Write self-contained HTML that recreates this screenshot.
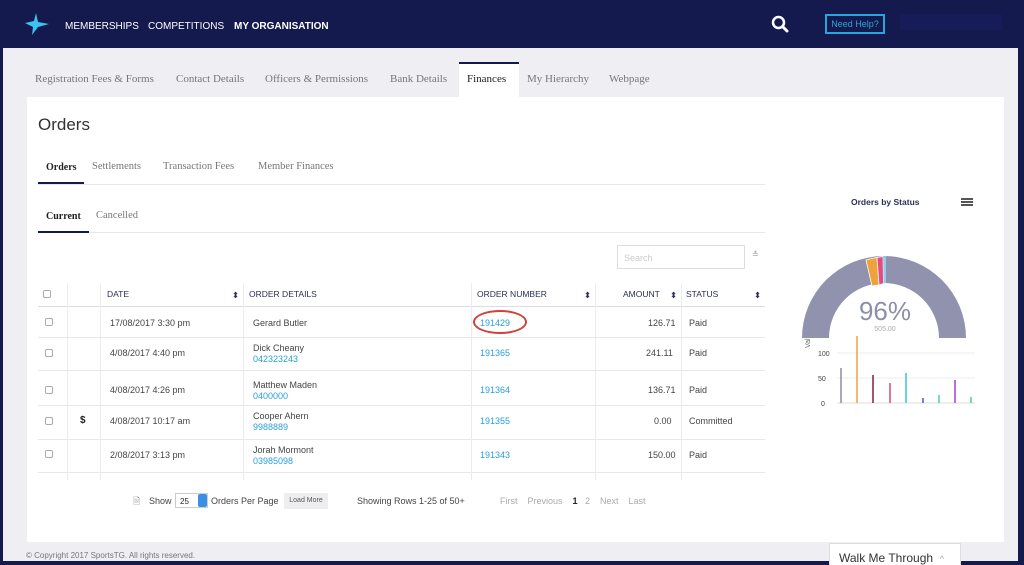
<!DOCTYPE html>
<html><head><style>
*{box-sizing:border-box;margin:0;padding:0}
body{width:1024px;height:565px;overflow:hidden;background:#141a4e;font-family:"Liberation Sans",sans-serif;position:relative}
.a{position:absolute}
.nav{color:#fff;font-size:10px;top:21px}
.grey{left:3px;top:48px;width:1015px;height:513px;background:#efeef2}
.tab{top:73px;font-family:"Liberation Serif",serif;font-size:11px;color:#777}
.panel{left:27px;top:97px;width:977px;height:445px;background:#fff}
.t{font-size:9px;color:#444}
.hd{font-size:8.5px;color:#2b2f55}
.lnk{color:#2a9fd6;font-size:9px}
.hl{height:1px;background:#e8e8ec}
.vl{width:1px;background:#ececf0}
.cb{width:8px;height:8px;border:1px solid #aaa;border-radius:2px;background:#fff}
</style></head><body>
<svg class="a" style="left:24px;top:12px" width="26" height="24" viewBox="0 0 26 24"><path d="M12 1 L14 10 L25 12 L14 15 L8 23 L9 15 L1 11 L10 9 Z" fill="#3cc4f0"/></svg>
<div class="a nav" style="left:65px">MEMBERSHIPS</div>
<div class="a nav" style="left:148px">COMPETITIONS</div>
<div class="a nav" style="left:234px;font-weight:bold">MY ORGANISATION</div>
<svg class="a" style="left:771px;top:15px" width="18" height="18" viewBox="0 0 18 18"><circle cx="7.5" cy="7.5" r="5.5" fill="none" stroke="#fff" stroke-width="2.5"/><path d="M11.5 11.5 L16 16" stroke="#fff" stroke-width="3" stroke-linecap="round"/></svg>
<div class="a" style="left:825px;top:14px;width:60px;height:20px;border:2px solid #2aa5dc;color:#2aa5dc;font-size:9px;text-align:center;line-height:16px">Need Help?</div>
<div class="a" style="left:900px;top:14px;width:102px;height:16px;background:#16206a;opacity:.4"></div>
<div class="a grey"></div>
<div class="a tab" style="left:35px">Registration Fees &amp; Forms</div>
<div class="a tab" style="left:176px">Contact Details</div>
<div class="a tab" style="left:265px">Officers &amp; Permissions</div>
<div class="a tab" style="left:390px">Bank Details</div>
<div class="a" style="left:459px;top:62px;width:60px;height:36px;background:#fff;border-top:2px solid #141a4e"></div>
<div class="a tab" style="left:467px;color:#222">Finances</div>
<div class="a tab" style="left:527px">My Hierarchy</div>
<div class="a tab" style="left:609px">Webpage</div>
<div class="a panel"></div>
<div class="a" style="left:38px;top:115px;font-size:17px;color:#333">Orders</div>
<div class="a" style="left:46px;top:162px;font-size:10px;color:#222;font-weight:bold;font-family:'Liberation Serif',serif">Orders</div>
<div class="a tab" style="left:92px;top:161px;font-size:10.5px">Settlements</div>
<div class="a tab" style="left:163px;top:161px;font-size:10.5px">Transaction Fees</div>
<div class="a tab" style="left:258px;top:161px;font-size:10.5px">Member Finances</div>
<div class="a hl" style="left:38px;top:184px;width:727px"></div>
<div class="a" style="left:38px;top:182px;width:46px;height:2px;background:#141a4e"></div>
<div class="a" style="left:46px;top:211px;font-size:10px;color:#222;font-weight:bold;font-family:'Liberation Serif',serif">Current</div>
<div class="a tab" style="left:96px;top:210px;font-size:10.5px">Cancelled</div>
<div class="a hl" style="left:38px;top:232px;width:727px"></div>
<div class="a" style="left:38px;top:231px;width:51px;height:2px;background:#141a4e"></div>
<div class="a" style="left:617px;top:245px;width:128px;height:24px;border:1px solid #ddd;font-size:9px;color:#ccc;padding:7px 6px">Search</div>
<div class="a" style="left:752px;top:250px;font-size:8px;color:#999">≛</div>
<div class="a hl" style="left:38px;top:306px;width:727px;background:#dcdce2"></div>
<div class="a hl" style="left:38px;top:337px;width:727px"></div>
<div class="a hl" style="left:38px;top:370px;width:727px"></div>
<div class="a hl" style="left:38px;top:405px;width:727px"></div>
<div class="a hl" style="left:38px;top:439px;width:727px"></div>
<div class="a hl" style="left:38px;top:472px;width:727px"></div>
<div class="a vl" style="left:67px;top:283px;height:197px"></div>
<div class="a vl" style="left:100px;top:283px;height:197px"></div>
<div class="a vl" style="left:243px;top:283px;height:197px"></div>
<div class="a vl" style="left:471px;top:283px;height:197px"></div>
<div class="a vl" style="left:595px;top:283px;height:197px"></div>
<div class="a vl" style="left:681px;top:283px;height:197px"></div>
<div class="a cb" style="left:43px;top:290px"></div>
<div class="a hd" style="left:107px;top:289px">DATE</div><div class="a hd" style="left:232px;top:290px">⬍</div>
<div class="a hd" style="left:249px;top:289px">ORDER DETAILS</div>
<div class="a hd" style="left:477px;top:289px">ORDER NUMBER</div><div class="a hd" style="left:584px;top:290px">⬍</div>
<div class="a hd" style="left:623px;top:289px">AMOUNT</div><div class="a hd" style="left:670px;top:290px">⬍</div>
<div class="a hd" style="left:686px;top:289px">STATUS</div><div class="a hd" style="left:754px;top:290px">⬍</div>

<div class="a cb" style="left:45px;top:318px"></div><div class="a t" style="left:110px;top:318px">17/08/2017 3:30 pm</div><div class="a t" style="left:253px;top:318px">Gerard Butler</div><div class="a lnk" style="left:480px;top:318px">191429</div><div class="a t" style="left:648px;top:318px">126.71</div><div class="a t" style="left:689px;top:318px">Paid</div>
<div class="a" style="left:473px;top:310px;width:54px;height:24px;border:2.5px solid #d0413a;border-radius:50%"></div>
<div class="a cb" style="left:45px;top:349px"></div><div class="a t" style="left:110px;top:348px">4/08/2017 4:40 pm</div><div class="a t" style="left:253px;top:343px">Dick Cheany</div><div class="a lnk" style="left:253px;top:354px">042323243</div><div class="a lnk" style="left:480px;top:348px">191365</div><div class="a t" style="left:646px;top:348px">241.11</div><div class="a t" style="left:689px;top:348px">Paid</div>
<div class="a cb" style="left:45px;top:386px"></div><div class="a t" style="left:110px;top:385px">4/08/2017 4:26 pm</div><div class="a t" style="left:253px;top:380px">Matthew Maden</div><div class="a lnk" style="left:253px;top:391px">0400000</div><div class="a lnk" style="left:480px;top:385px">191364</div><div class="a t" style="left:648px;top:385px">136.71</div><div class="a t" style="left:689px;top:385px">Paid</div>
<div class="a cb" style="left:45px;top:417px"></div><div class="a" style="left:80px;top:415px;font-size:10px;font-weight:bold;color:#222">$</div><div class="a t" style="left:110px;top:416px">4/08/2017 10:17 am</div><div class="a t" style="left:253px;top:411px">Cooper Ahern</div><div class="a lnk" style="left:253px;top:422px">9988889</div><div class="a lnk" style="left:480px;top:416px">191355</div><div class="a t" style="left:654px;top:416px">0.00</div><div class="a t" style="left:689px;top:416px">Committed</div>
<div class="a cb" style="left:45px;top:450px"></div><div class="a t" style="left:110px;top:450px">2/08/2017 3:13 pm</div><div class="a t" style="left:253px;top:445px">Jorah Mormont</div><div class="a lnk" style="left:253px;top:456px">03985098</div><div class="a lnk" style="left:480px;top:450px">191343</div><div class="a t" style="left:648px;top:450px">150.00</div><div class="a t" style="left:689px;top:450px">Paid</div>
<div class="a" style="left:133px;top:494px;font-size:9px;color:#777">🗎</div>
<div class="a t" style="left:149px;top:496px">Show</div>
<div class="a" style="left:175px;top:493px;width:33px;height:15px;border:1px solid #ccc;font-size:8px;padding:3px 4px;color:#222">25</div>
<div class="a" style="left:198px;top:494px;width:9px;height:13px;background:#3a8ee6;border-radius:2px"></div>
<div class="a t" style="left:211px;top:496px">Orders Per Page</div>
<div class="a" style="left:284px;top:493px;width:44px;height:16px;background:#eeeef0;font-size:7px;color:#555;text-align:center;line-height:16px">Load More</div>
<div class="a t" style="left:357px;top:496px">Showing Rows 1-25 of 50+</div>
<div class="a t" style="left:500px;top:496px;color:#aaa">First &nbsp;&nbsp; Previous &nbsp;&nbsp; <b style="color:#222">1</b> &nbsp;&nbsp;2 &nbsp;&nbsp; Next &nbsp;&nbsp; Last</div>
<div class="a" style="left:26px;top:551px;font-size:8px;color:#777">© Copyright 2017 SportsTG. All rights reserved.</div>
<div class="a" style="left:851px;top:197px;font-size:8.5px;font-weight:bold;color:#2b2f55">Orders by Status</div>
<div class="a" style="left:961px;top:198px;width:12px;height:2px;background:#555;box-shadow:0 3px 0 #555,0 6px 0 #555"></div>
<svg class="a" style="left:780px;top:230px" width="220" height="180" viewBox="0 0 220 180">
<path d="M22 108 A82 82 0 0 1 186 108 L159 108 A55 55 0 0 0 49 108 Z" fill="#9193ae"/>
<path d="M86 30 A82 82 0 0 1 97 27.5 L99 55 A55 55 0 0 0 92 56 Z" fill="#f0a23a" stroke="#fff" stroke-width=".8"/>
<path d="M97 27.5 A82 82 0 0 1 103 26.5 L103.5 53.5 A55 55 0 0 0 99 55 Z" fill="#e84a7f" stroke="#fff" stroke-width=".8"/>
<path d="M103 26.5 A82 82 0 0 1 106 26 L106 53 L103.5 53.5 Z" fill="#8fd0ee"/>
<text x="105" y="90" font-size="26" fill="#8d8fa8" text-anchor="middle" font-family="Liberation Sans">96%</text>
<text x="105" y="101" font-size="7" fill="#aaa" text-anchor="middle" font-family="Liberation Sans">505.00</text>
<line x1="57" y1="123" x2="195" y2="123" stroke="#eee"/>
<line x1="57" y1="148" x2="195" y2="148" stroke="#eee"/>
<text x="38" y="126" font-size="7" fill="#444">100</text>
<text x="38" y="151" font-size="7" fill="#444">50</text>
<text x="41" y="176" font-size="7" fill="#444">0</text>
<text x="30" y="118" font-size="7" fill="#666" transform="rotate(-90 30 118)">Val</text>
<line x1="57" y1="173" x2="195" y2="173" stroke="#ddd"/>
<g stroke-width="1.5"><line x1="61" y1="173" x2="61" y2="138" stroke="#8a8aa8"/><line x1="77" y1="173" x2="77" y2="106" stroke="#f0a23a"/><line x1="93" y1="173" x2="93" y2="145" stroke="#8a1a40"/><line x1="110" y1="173" x2="110" y2="153" stroke="#d04a7a"/><line x1="126" y1="173" x2="126" y2="143" stroke="#3ac0e0"/><line x1="143" y1="173" x2="143" y2="168" stroke="#3a5ad0"/><line x1="159" y1="173" x2="159" y2="165" stroke="#4ad0a0"/><line x1="175" y1="173" x2="175" y2="150" stroke="#a040d0"/><line x1="191" y1="173" x2="191" y2="167" stroke="#4ad080"/></g>
</svg>
<div class="a" style="left:829px;top:543px;width:132px;height:22px;background:#fff;border:1px solid #ddd;border-bottom:none;font-size:12px;color:#333;padding:7px 9px">Walk Me Through &nbsp;<span style="color:#aaa;font-size:9px">^</span></div>
</body></html>
